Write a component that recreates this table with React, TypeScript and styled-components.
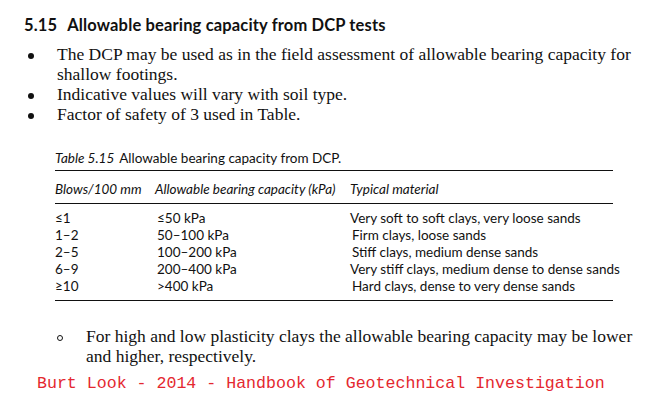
import React from "react";
import styled, { createGlobalStyle } from "styled-components";

const Global = createGlobalStyle`
  html, body { margin: 0; padding: 0; background: #fff; }
  body { width: 656px; height: 401px; overflow: hidden; }
`;

const Page = styled.div`
  width: 656px;
  height: 401px;
  box-sizing: border-box;
  padding: 14px 0 0 24px;
  display: flex;
  flex-direction: column;
  color: #111;
`;

const Heading = styled.h2`
  margin: 0;
  font-family: Lato, "Open Sans", sans-serif;
  font-weight: 700;
  font-size: 16.5px;
  line-height: 22px;
  letter-spacing: 0.15px;
  display: flex;
  gap: 10px;
`;

const BulletList = styled.ul`
  margin: 8px 0 0 0;
  padding: 0;
  list-style: none;
  font-family: "Liberation Serif", serif;
  font-size: 17.5px;
  line-height: 20px;
  color: #111;
`;

const Bullet = styled.li<{ $marker: "disc" | "circle" }>`
  display: grid;
  grid-template-columns: 29px 1fr;
  align-items: start;
  padding-left: ${(p) => (p.$marker === "circle" ? 33 : 4)}px;
  &::before {
    content: "";
    box-sizing: border-box;
    margin-top: 9px;
    width: 6px;
    height: 6px;
    border-radius: 50%;
    ${(p) => (p.$marker === "circle" ? "border: 1px solid #111;" : "background: #111;")}
  }
`;

const TableBlock = styled.div`
  margin: 26px 0 0 31px;
  width: 558px;
  font-family: Lato, "Open Sans", sans-serif;
  font-size: 13.5px;
  color: #111;
`;

const Caption = styled.div`
  line-height: 16px;
  padding-bottom: 4px;
  em { font-style: italic; margin-right: 5px; }
`;

const Row = styled.div<{ $head?: boolean }>`
  display: grid;
  grid-template-columns: 100px 195px 1fr;
  line-height: 17px;
  font-style: ${(p) => (p.$head ? "italic" : "normal")};
  ${(p) =>
    p.$head
      ? `border-top: 1px solid #111; border-bottom: 1px solid #111; padding: 10px 0 5px;`
      : ""}
`;

const Body = styled.div`
  padding: 6px 0 5px;
  border-bottom: 1px solid #111;
`;

const Cell = styled.span<{ $shift?: number }>`
  padding-left: ${(p) => p.$shift ?? 0}px;
  white-space: nowrap;
`;

const Note = styled(BulletList)`
  margin-top: 25px;
`;

const Source = styled.div`
  margin: 8px 0 0 13px;
  font-family: "Liberation Mono", monospace;
  font-size: 16.6px;
  line-height: 20px;
  color: #e4282f;
`;

const rows: [string, string, string, number][] = [
  ["≤1", "≤50 kPa", "Very soft to soft clays, very loose sands", 0],
  ["1–2", "50–100 kPa", "Firm clays, loose sands", 2],
  ["2–5", "100–200 kPa", "Stiff clays, medium dense sands", 2],
  ["6–9", "200–400 kPa", "Very stiff clays, medium dense to dense sands", 0],
  ["≥10", ">400 kPa", "Hard clays, dense to very dense sands", 2],
];

export default function App() {
  return (
    <>
      <Global />
      <Page>
        <Heading>
          <span>5.15</span>
          <span>Allowable bearing capacity from DCP tests</span>
        </Heading>
        <BulletList>
          <Bullet $marker="disc">
            <span>
              The DCP may be used as in the field assessment of allowable bearing capacity for
              shallow footings.
            </span>
          </Bullet>
          <Bullet $marker="disc">
            <span>Indicative values will vary with soil type.</span>
          </Bullet>
          <Bullet $marker="disc">
            <span>Factor of safety of 3 used in Table.</span>
          </Bullet>
        </BulletList>
        <TableBlock>
          <Caption>
            <em>Table 5.15</em>Allowable bearing capacity from DCP.
          </Caption>
          <Row $head>
            <Cell>Blows/100 mm</Cell>
            <Cell>Allowable bearing capacity (kPa)</Cell>
            <Cell>Typical material</Cell>
          </Row>
          <Body>
            {rows.map(([a, b, c, s]) => (
              <Row key={a}>
                <Cell>{a}</Cell>
                <Cell $shift={2}>{b}</Cell>
                <Cell $shift={s}>{c}</Cell>
              </Row>
            ))}
          </Body>
        </TableBlock>
        <Note>
          <Bullet $marker="circle">
            <span>
              For high and low plasticity clays the allowable bearing capacity may be lower and
              higher, respectively.
            </span>
          </Bullet>
        </Note>
        <Source>Burt Look - 2014 - Handbook of Geotechnical Investigation</Source>
      </Page>
    </>
  );
}
